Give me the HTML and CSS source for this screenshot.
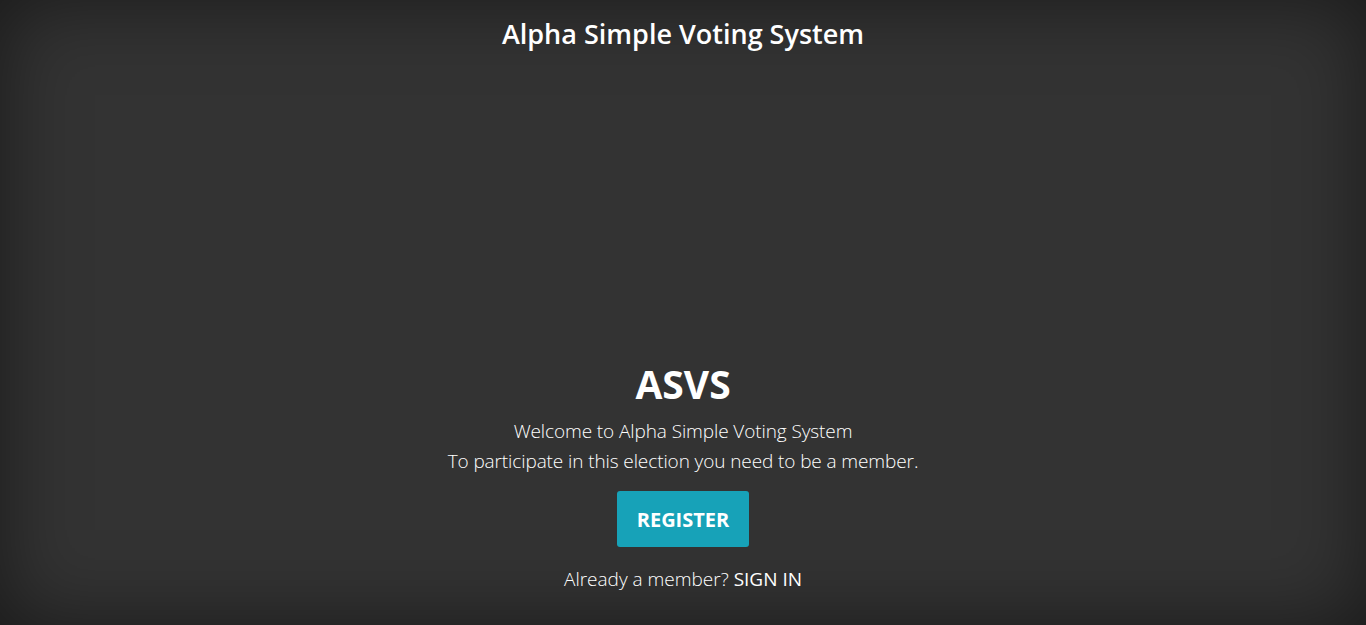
FILE: index.html
```html
<!DOCTYPE html>
<html lang="en">
<head>
<meta charset="utf-8">
<title>Alpha Simple Voting System</title>
<link rel="stylesheet" href="styles.css">
</head>
<body>
<div class="cover">
  <header class="masthead">
    <h3 class="brand">Alpha Simple Voting System</h3>
  </header>
  <main class="inner">
    <h1 class="cover-heading">ASVS</h1>
    <p class="lead">Welcome to Alpha Simple Voting System<br>To participate in this election you need to be a member.</p>
    <p class="actions"><a class="btn-register" href="#">REGISTER</a></p>
    <p class="signin">Already a member? <a class="signin-link" href="#">SIGN IN</a></p>
  </main>
</div>
</body>
</html>
```
FILE: styles.css
```css
html, body {
  margin: 0;
  height: 100%;
}
body {
  background: #333;
  color: #fff;
  font-family: "Open Sans", "Noto Sans", sans-serif;
  box-shadow: inset 0 0 5rem rgba(0, 0, 0, 0.5);
  text-align: center;
}
.cover {
  height: 625px;
  display: flex;
  flex-direction: column;
  box-sizing: border-box;
  padding: 0 0 31px;
}
.masthead {
  padding-top: 15px;
}
.brand {
  margin: 0;
  font-size: 27px;
  font-weight: 600;
  line-height: 38px;
}
.inner {
  margin-top: auto;
}
.cover-heading {
  margin: 0 0 10px;
  font-size: 39px;
  font-weight: 700;
  line-height: 44px;
}
.lead {
  margin: 0;
  font-size: 19px;
  font-weight: 300;
  line-height: 30px;
  letter-spacing: -0.1px;
}
.actions {
  margin: 15px 0 0;
}
.btn-register {
  display: inline-block;
  width: 132px;
  height: 56px;
  line-height: 57px;
  background: #17a2b8;
  border-radius: 3px;
  color: #fff;
  font-weight: 700;
  font-size: 20px;
  text-decoration: none;
}
.signin {
  margin: 17px 0 0;
  font-size: 19px;
  font-weight: 300;
  line-height: 30px;
}
.signin-link {
  color: #fff;
  font-weight: 400;
  text-decoration: none;
}
```
